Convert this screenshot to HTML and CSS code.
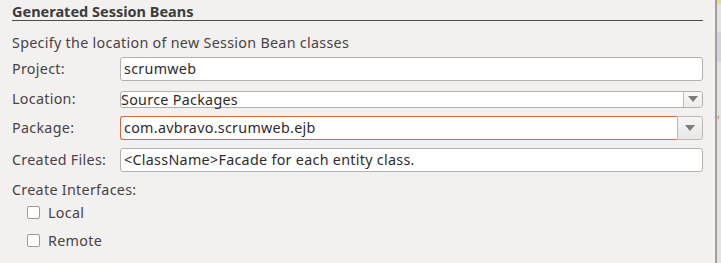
FILE: index.html
```html
<!DOCTYPE html>
<html>
<head>
<meta charset="utf-8">
<link rel="stylesheet" href="styles.css">
</head>
<body>
<div class="window">
  <div class="panel">
    <div class="heading">Generated Session Beans</div>
    <div class="desc">Specify the location of new Session Bean classes</div>
    <div class="form">
      <label class="lbl">Project:</label>
      <div class="field text-field">scrumweb</div>

      <label class="lbl lbl-location">Location:</label>
      <div class="field combo">
        <span class="combo-text">Source Packages</span>
        <span class="combo-btn"><span class="arrow"></span></span>
      </div>

      <label class="lbl">Package:</label>
      <div class="field edit-combo">
        <span class="edit-text">com.avbravo.scrumweb.ejb</span>
        <span class="edit-btn"><span class="arrow"></span></span>
      </div>

      <label class="lbl">Created Files:</label>
      <div class="field text-field">&lt;ClassName&gt;Facade for each entity class.</div>
    </div>
    <div class="ifaces">Create Interfaces:</div>
    <div class="check-row first"><span class="box"></span><span>Local</span></div>
    <div class="check-row"><span class="box"></span><span>Remote</span></div>
  </div>
  <div class="sep"></div>
  <div class="side">
    <div class="side-top"></div>
    <div class="side-blue"></div>
    <div class="side-ru">'</div>
  </div>
</div>
</body>
</html>
```
FILE: styles.css
```css
html, body {
  margin: 0;
  padding: 0;
  background: #f2f1f0;
}
body {
  font-family: "Noto Sans", "DejaVu Sans", sans-serif;
  font-size: 14.3px;
  letter-spacing: 0.3px;
  color: #4a4147;
  width: 721px;
  height: 263px;
  overflow: hidden;
}
.window {
  display: flex;
  height: 263px;
}
.panel {
  width: 691px;
  padding-left: 12px;
  flex: none;
}
.heading {
  font-weight: bold;
  font-size: 14.5px;
  letter-spacing: 0;
  height: 20px;
  line-height: 22px;
  border-bottom: 1px solid #4c4c4c;
  color: #3c3c3c;
  white-space: nowrap;
}
.desc {
  margin-top: 13px;
  height: 18px;
  line-height: 18px;
  white-space: nowrap;
}
.form {
  margin-top: 5px;
  display: grid;
  grid-template-columns: 108px 583px;
  row-gap: 8px;
  align-items: center;
}
.lbl {
  line-height: 18px;
}
.field {
  box-sizing: border-box;
  background: #fff;
  border: 1px solid #b3b0ad;
  border-radius: 3px;
  color: #2e2a2d;
  white-space: nowrap;
}
.text-field {
  height: 24px;
  line-height: 22px;
  padding-left: 3px;
}
.combo {
  height: 17px;
  display: flex;
  align-items: stretch;
  margin-top: 1px;
}
.lbl-location {
  margin-top: 1px;
}
.combo-text {
  flex: 1;
  line-height: 15px;
}
.combo-btn {
  width: 18px;
  border-left: 1px solid #c0bdba;
  display: flex;
  align-items: center;
  justify-content: center;
  background: linear-gradient(#f8f8f7, #ecebe9);
  border-radius: 0 3px 3px 0;
}
.edit-combo {
  height: 24px;
  display: flex;
  border: none;
  background: transparent;
}
.edit-text {
  flex: none;
  width: 557px;
  box-sizing: border-box;
  background: #fff;
  border: 1px solid #e0643a;
  border-right: none;
  border-radius: 3px 0 0 3px;
  line-height: 22px;
  padding-left: 3px;
}
.edit-btn {
  flex: 1;
  box-sizing: border-box;
  border: 1px solid #bcb9b6;
  border-radius: 0 3px 3px 0;
  background: linear-gradient(#f6f5f4, #e8e7e5);
  display: flex;
  align-items: center;
  justify-content: center;
}
.arrow {
  width: 0;
  height: 0;
  border-left: 5px solid transparent;
  border-right: 5px solid transparent;
  border-top: 6px solid #7d7b79;
}
.ifaces {
  margin-top: 9px;
  height: 18px;
  line-height: 18px;
}
.check-row {
  display: flex;
  align-items: center;
  gap: 8px;
  padding-left: 15px;
  height: 18px;
  margin-top: 10px;
}
.check-row.first {
  margin-top: 4px;
}
.box {
  width: 13px;
  height: 13px;
  box-sizing: border-box;
  border: 1px solid #9d9a97;
  border-radius: 2px;
  background: #fff;
}
.sep {
  width: 12px;
  flex: none;
  border-right: 2px solid #a19e9b;
}
.side {
  flex: 1;
  background: #e4e3e1;
  display: flex;
  flex-direction: column;
  font-size: 12px;
  color: #c8841a;
  overflow: hidden;
}
.side-top {
  height: 4px;
  background: #e8dc8a;
}
.side-blue {
  height: 30px;
  margin-top: 28px;
  background: #d3d5db;
}
.side-ru {
  margin-top: 52px;
  line-height: 14px;
}
```
